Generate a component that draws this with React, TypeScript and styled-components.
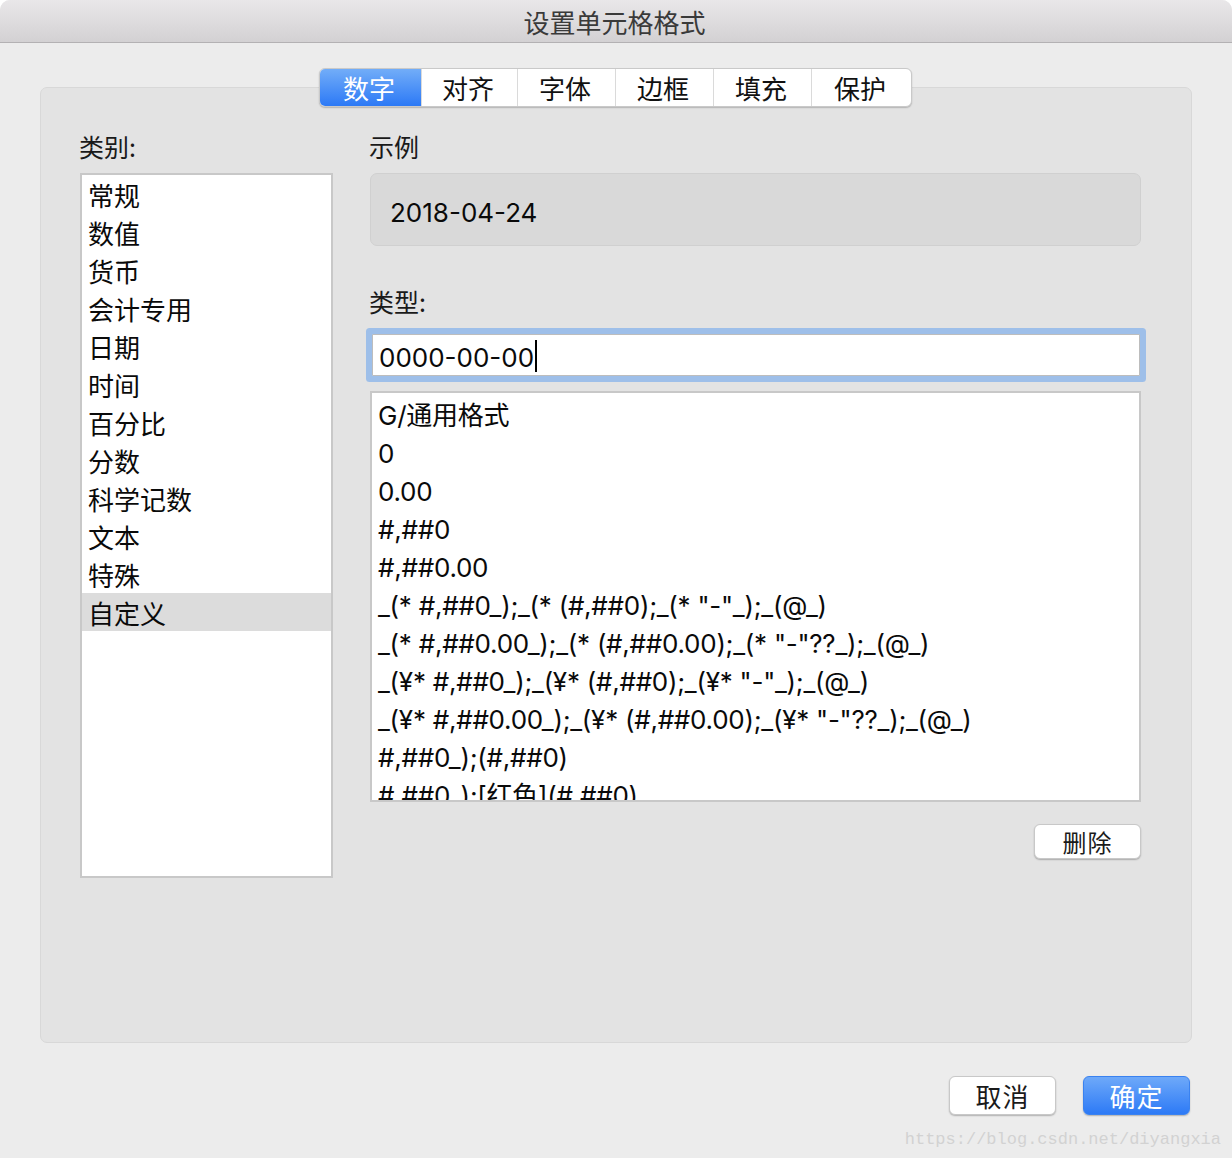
import React from "react";
import styled, { createGlobalStyle } from "styled-components";

const GlobalStyle = createGlobalStyle`
  html, body {
    margin: 0;
    padding: 0;
    background: #ffffff;
  }
  body {
    font-family: Inter, "Noto Sans CJK SC", sans-serif;
    color: #111;
  }
`;

const FONT = `Inter, "Noto Sans CJK SC", sans-serif`;

const Window = styled.div`
  position: relative;
  width: 1232px;
  height: 1158px;
  display: flex;
  flex-direction: column;
  background: #ececec;
  border-radius: 10px 10px 0 0;
  overflow: hidden;
  font-family: ${FONT};
`;

const TitleBar = styled.div`
  height: 43px;
  flex: none;
  display: flex;
  align-items: center;
  justify-content: center;
  padding: 2px 3px 0 0;
  box-sizing: border-box;
  border-bottom: 1px solid #b3b1b3;
  background: linear-gradient(#e9e7e9, #d3d1d3);
  font-family: "Noto Sans CJK SC", sans-serif;
  font-size: 26px;
  color: #3a3a3a;
  line-height: 30px;
`;

const Content = styled.div`
  flex: 1;
  display: flex;
  flex-direction: column;
  padding: 25px 40px 0 40px;
`;

const TabBar = styled.div`
  position: relative;
  z-index: 1;
  align-self: center;
  display: flex;
  height: 39px;
  box-sizing: border-box;
  background: #ffffff;
  border: 1px solid #c9c9c9;
  border-radius: 6px;
  box-shadow: 0 1px 1.5px rgba(0, 0, 0, 0.22);
  overflow: hidden;
  margin-left: -1px;
`;

const Tab = styled.div<{ $active?: boolean; $w: number }>`
  width: ${(p) => p.$w}px;
  display: flex;
  align-items: center;
  justify-content: center;
  padding-right: 3px;
  box-sizing: border-box;
  font-family: "Noto Sans CJK SC", sans-serif;
  font-size: 26px;
  line-height: 30px;
  color: ${(p) => (p.$active ? "#ffffff" : "#111111")};
  background: ${(p) =>
    p.$active ? "linear-gradient(#72adf8, #2c79f6)" : "transparent"};
  & + & {
    border-left: 1px solid #dadada;
  }
`;

const Panel = styled.div`
  margin-top: -20px;
  height: 956px;
  box-sizing: border-box;
  background: #e3e3e3;
  border: 1px solid #d8d8d8;
  border-radius: 7px;
  padding: 45px 50px 0 39px;
  display: grid;
  grid-template-columns: 253px 771px;
  column-gap: 37px;
  align-items: start;
`;

const Column = styled.div`
  display: flex;
  flex-direction: column;
`;

const Label = styled.div<{ $gap?: number }>`
  font-family: "Noto Sans CJK SC", sans-serif;
  font-size: 25px;
  line-height: 26px;
  height: 26px;
  color: #1a1a1a;
  margin-top: ${(p) => p.$gap ?? 0}px;
  margin-left: -1px;
`;

const ListBox = styled.div<{ $h: number; $top: number }>`
  margin-top: ${(p) => p.$top}px;
  height: ${(p) => p.$h}px;
  box-sizing: border-box;
  background: #ffffff;
  border: 2px solid #c8c8c8;
  overflow: hidden;
  display: flex;
  flex-direction: column;
`;

const Row = styled.div<{ $selected?: boolean; $shift: number; $tight?: boolean }>`
  flex: none;
  height: 38px;
  box-sizing: border-box;
  line-height: 38px;
  padding: ${(p) => p.$shift}px 0 0 6px;
  font-family: ${FONT};
  font-size: 26px;
  letter-spacing: ${(p) => (p.$tight ? "-0.25px" : "0")};
  color: #0a0a0a;
  white-space: nowrap;
  background: ${(p) => (p.$selected ? "#dcdcdc" : "transparent")};
`;

const SampleBox = styled.div`
  margin-top: 14px;
  height: 73px;
  box-sizing: border-box;
  background: #d9d9d9;
  border: 1px solid #d0d0d0;
  border-radius: 7px;
  padding: 5px 0 0 19px;
  display: flex;
  align-items: center;
  font-size: 26px;
  color: #0a0a0a;
`;

const InputField = styled.div`
  margin-top: 20px;
  height: 42px;
  box-sizing: border-box;
  margin-left: 2px;
  margin-right: 1px;
  background: #ffffff;
  border: 1px solid #bdbdbd;
  border-radius: 1px;
  box-shadow: 0 0 0 6px #9ebfe9;
  padding: 5px 0 0 6px;
  display: flex;
  align-items: center;
  font-size: 26px;
  color: #0a0a0a;
`;

const Caret = styled.span`
  display: inline-block;
  width: 2px;
  height: 32px;
  background: #000;
  margin: -4px 0 0 1px;
`;

const PushButton = styled.button<{ $primary?: boolean; $h: number; $fs: number }>`
  width: 107px;
  height: ${(p) => p.$h}px;
  box-sizing: border-box;
  padding: 0;
  font-family: "Noto Sans CJK SC", sans-serif;
  font-size: ${(p) => p.$fs}px;
  line-height: 1;
  letter-spacing: 1px;
  border-radius: 6px;
  cursor: default;
  color: ${(p) => (p.$primary ? "#ffffff" : "#1a1a1a")};
  background: ${(p) =>
    p.$primary ? "linear-gradient(#6ea9f9, #2d7af6)" : "#ffffff"};
  border: 1px solid ${(p) => (p.$primary ? "#3a82f0" : "#c8c8c8")};
  box-shadow: 0 1px 1.5px rgba(0, 0, 0, 0.25);
`;

const DeleteButton = styled(PushButton)`
  align-self: flex-end;
  margin-top: 22px;
`;

const Footer = styled.div`
  display: flex;
  justify-content: flex-end;
  gap: 27px;
  padding: 33px 2px 0 0;
`;

const Watermark = styled.div`
  position: absolute;
  right: 11px;
  bottom: 9px;
  font-family: "Liberation Mono", monospace;
  font-size: 17px;
  color: #d2d2d2;
`;

const tabs: [string, number][] = [
  ["数字", 101],
  ["对齐", 96],
  ["字体", 98],
  ["边框", 98],
  ["填充", 98],
  ["保护", 100],
];

const categories = [
  "常规",
  "数值",
  "货币",
  "会计专用",
  "日期",
  "时间",
  "百分比",
  "分数",
  "科学记数",
  "文本",
  "特殊",
  "自定义",
];

const formats = [
  "G/通用格式",
  "0",
  "0.00",
  "#,##0",
  "#,##0.00",
  '_(* #,##0_);_(* (#,##0);_(* "-"_);_(@_)',
  '_(* #,##0.00_);_(* (#,##0.00);_(* "-"??_);_(@_)',
  '_(¥* #,##0_);_(¥* (#,##0);_(¥* "-"_);_(@_)',
  '_(¥* #,##0.00_);_(¥* (#,##0.00);_(¥* "-"??_);_(@_)',
  "#,##0_);(#,##0)",
  "#,##0_);[红色](#,##0)",
];

export default function App() {
  return (
    <>
      <GlobalStyle />
      <Window>
        <TitleBar>设置单元格格式</TitleBar>
        <Content>
          <TabBar>
            {tabs.map(([t, w], i) => (
              <Tab key={t} $w={w} $active={i === 0}>
                {t}
              </Tab>
            ))}
          </TabBar>
          <Panel>
            <Column>
              <Label>类别:</Label>
              <ListBox $h={705} $top={14}>
                {categories.map((c, i) => (
                  <Row key={c} $shift={3} $selected={i === categories.length - 1}>
                    {c}
                  </Row>
                ))}
              </ListBox>
            </Column>
            <Column>
              <Label>示例</Label>
              <SampleBox>2018-04-24</SampleBox>
              <Label $gap={42}>类型:</Label>
              <InputField>
                0000-00-00
                <Caret />
              </InputField>
              <ListBox $h={411} $top={15}>
                {formats.map((f) => (
                  <Row key={f} $shift={4} $tight>
                    {f}
                  </Row>
                ))}
              </ListBox>
              <DeleteButton $h={35} $fs={24}>
                删除
              </DeleteButton>
            </Column>
          </Panel>
          <Footer>
            <PushButton $h={39} $fs={26}>
              取消
            </PushButton>
            <PushButton $h={39} $fs={26} $primary>
              确定
            </PushButton>
          </Footer>
        </Content>
        <Watermark>https://blog.csdn.net/diyangxia</Watermark>
      </Window>
    </>
  );
}
